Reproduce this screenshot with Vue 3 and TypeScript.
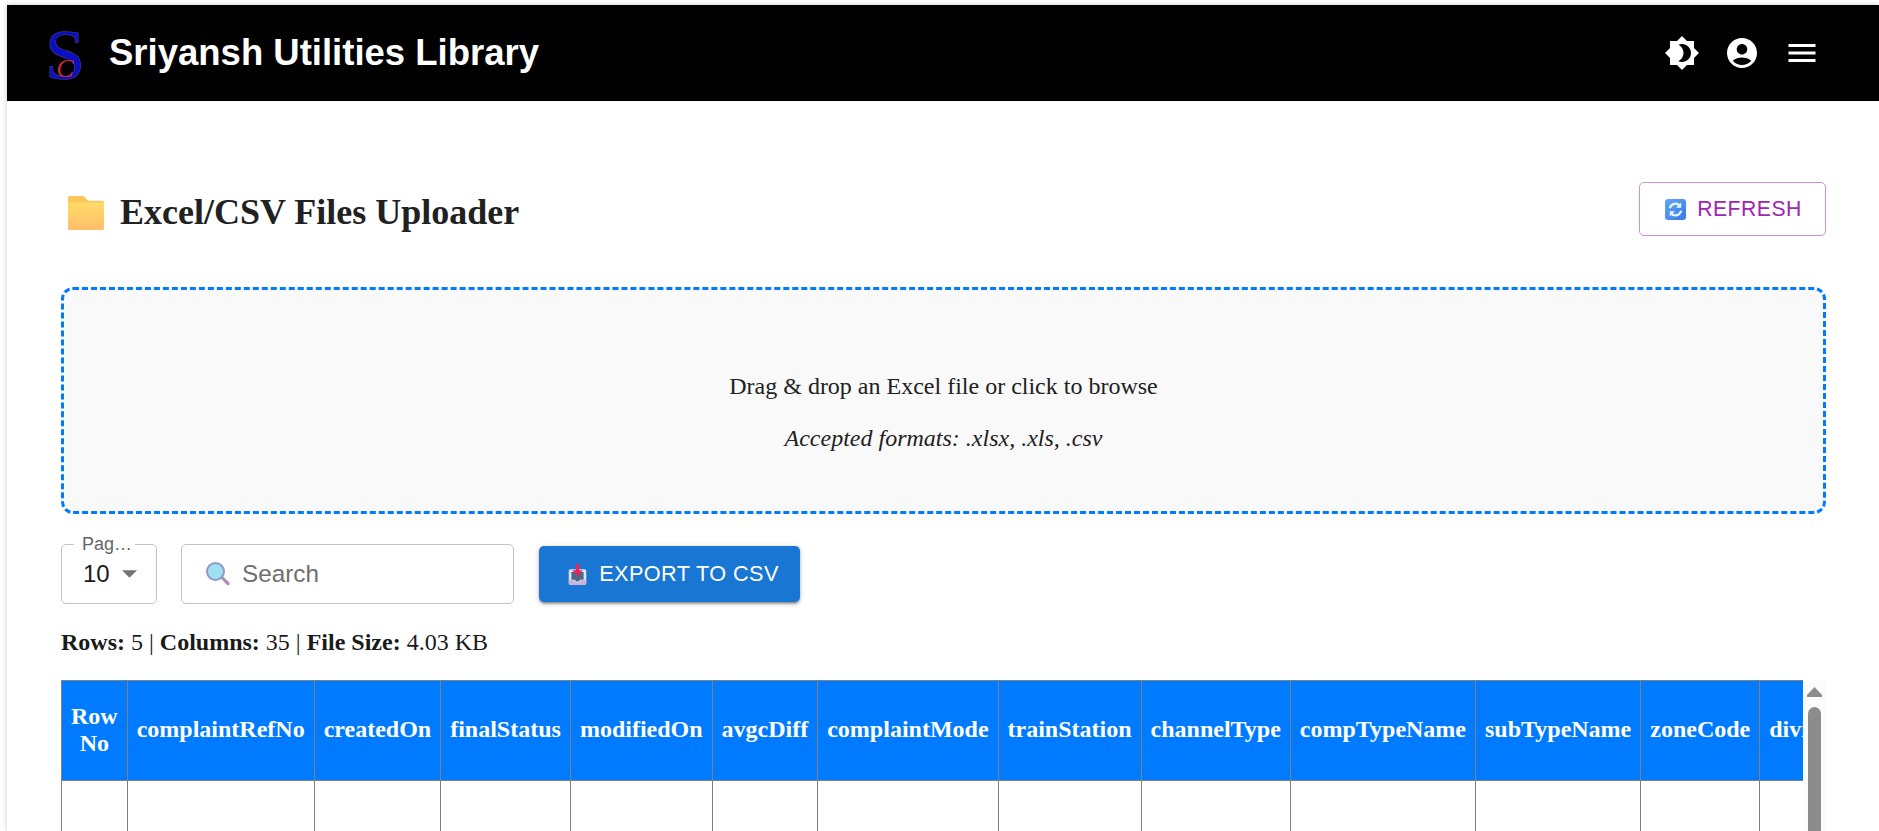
<script setup lang="ts">
const columns: string[] = [
  'complaintRefNo', 'createdOn', 'finalStatus', 'modifiedOn', 'avgcDiff', 'complaintMode',
  'trainStation', 'channelType', 'compTypeName', 'subTypeName', 'zoneCode', 'divisionCode',
]
</script>

<template>
  <div class="frame">
    <div class="shell">
      <header class="appbar">
        <div class="brand">
          <svg class="logo" viewBox="0 0 44 60" aria-label="SC logo">
            <text class="logo-s" x="22" y="56" text-anchor="middle">S</text>
            <text class="logo-c" x="22" y="54" text-anchor="middle">C</text>
          </svg>
          <span class="brand-name">Sriyansh Utilities Library</span>
        </div>
        <div class="actions">
          <button class="icon-btn" type="button" aria-label="Theme">
            <svg viewBox="0 0 24 24"><path d="M20 8.69V4h-4.69L12 .69 8.69 4H4v4.69L.69 12 4 15.31V20h4.69L12 23.31 15.31 20H20v-4.69L23.31 12 20 8.69zM12 18c-.89 0-1.74-.2-2.5-.55C11.56 16.5 13 14.42 13 12s-1.44-4.5-3.5-5.45C10.26 6.2 11.11 6 12 6c3.31 0 6 2.69 6 6s-2.69 6-6 6z" /></svg>
          </button>
          <button class="icon-btn" type="button" aria-label="Account">
            <svg viewBox="0 0 24 24"><path d="M12 2C6.48 2 2 6.48 2 12s4.48 10 10 10 10-4.48 10-10S17.52 2 12 2zm0 4c1.93 0 3.5 1.57 3.5 3.5S13.93 13 12 13s-3.5-1.57-3.5-3.5S10.07 6 12 6zm0 14c-2.03 0-4.43-.82-6.14-2.88C7.55 15.8 9.68 15 12 15s4.45.8 6.14 2.12C16.43 19.18 14.03 20 12 20z" /></svg>
          </button>
          <button class="icon-btn" type="button" aria-label="Menu">
            <svg viewBox="0 0 24 24"><path d="M3 18h18v-2H3v2zm0-5h18v-2H3v2zm0-7v2h18V6H3z" /></svg>
          </button>
        </div>
      </header>

      <main class="content">
        <div class="title-row">
          <h1 class="title">
            <svg class="folder" viewBox="0 0 38 36">
              <defs>
                <linearGradient id="folderFront" x1="0" y1="0" x2="0" y2="1">
                  <stop offset="0" stop-color="#ffdc68" />
                  <stop offset="1" stop-color="#ffbd6b" />
                </linearGradient>
              </defs>
              <path d="M2 0h13c1.500 0 2.500.6 3.400 1.700L21 5h15c1.100 0 2 .9 2 2v6H0V2C0 .9.900 0 2 0z" fill="#fdc65c" />
              <rect y="7" width="38" height="29" rx="2" fill="url(#folderFront)" />
            </svg>
            <span>Excel/CSV Files Uploader</span>
          </h1>
          <button class="refresh" type="button">
            <svg class="btn-icon" viewBox="0 0 24 24">
              <defs>
                <linearGradient id="refreshBg" x1="0" y1="0" x2="1" y2="1">
                  <stop offset="0" stop-color="#5fa8f6" />
                  <stop offset="1" stop-color="#3a78e8" />
                </linearGradient>
              </defs>
              <rect width="24" height="24" rx="3.500" fill="url(#refreshBg)" />
              <path d="M5.500 10.500A6.800 6.800 0 0 1 17 7.500M18.500 13.500A6.800 6.800 0 0 1 7 16.500" fill="none" stroke="#eaf3ff" stroke-width="2.600" />
              <path d="M18.500 4v6h-6zM5.500 20v-6h6z" fill="#eaf3ff" />
            </svg>
            <span>REFRESH</span>
          </button>
        </div>

        <section class="dropzone">
          <p class="drop-main">Drag &amp; drop an Excel file or click to browse</p>
          <p class="drop-sub">Accepted formats: .xlsx, .xls, .csv</p>
        </section>

        <div class="toolbar">
          <div class="page-select">
            <span class="legend">Pag…</span>
            <span class="page-value">10</span>
            <svg class="caret" viewBox="0 0 14 7"><path d="M0 0h14L7 7z" /></svg>
          </div>
          <div class="search">
            <svg class="search-icon" viewBox="0 0 24 24">
              <path d="M14.500 16l2-2 6.600 6.300c.8.800.7 1.700 0 2.400-.7.700-1.600.8-2.400 0z" fill="#b48ab8" />
              <circle cx="9.500" cy="9.500" r="8.500" fill="#9fe0f0" stroke="#8c9cc6" stroke-width="2" />
            </svg>
            <span class="search-text">Search</span>
          </div>
          <button class="export" type="button">
            <svg class="btn-icon" viewBox="0 0 24 24">
              <path d="M4 6h16c1 0 2 1 2 2v13c0 1.500-1 3-3 3H5c-2 0-3-1.500-3-3V8c0-1 1-2 2-2z" fill="#dfe6f3" />
              <path d="M5 9h14v9h-4c-.5 1.500-1.500 2-3 2s-2.500-.5-3-2H5z" fill="#4c6a88" />
              <path d="M2 18h6c.5 2 2 3 4 3s3.500-1 4-3h6v4c0 1-1 2-2 2H4c-1 0-2-1-2-2z" fill="#c9b5de" />
              <path d="M10 0h4v7h4l-6 7-6-7h4z" fill="#e8245c" />
            </svg>
            <span>EXPORT TO CSV</span>
          </button>
        </div>

        <p class="stats"><b>Rows:</b> 5 | <b>Columns:</b> 35 | <b>File Size:</b> 4.03 KB</p>

        <div class="table-area">
          <div class="table-clip">
            <table class="data">
              <thead>
                <tr>
                  <th class="row-no">Row No</th>
                  <th v-for="c in columns" :key="c">{{ c }}</th>
                </tr>
              </thead>
              <tbody>
                <tr>
                  <td></td>
                  <td v-for="c in columns" :key="c"></td>
                </tr>
              </tbody>
            </table>
          </div>
          <div class="scrollbar">
            <span class="arrow"></span>
            <span class="thumb"></span>
          </div>
        </div>
      </main>
    </div>
  </div>
</template>

<style>
html, body { margin: 0; height: 831px; overflow: hidden; background: #fff; }
</style>

<style scoped>
.frame {
  height: 831px;
  overflow: hidden;
  box-sizing: border-box;
  padding: 5px 0 0 7px;
  background: #fff;
  font-family: "Liberation Serif", "Times New Roman", serif;
  color: #212121;
}
.shell {
  height: 826px;
  background: #fff;
  box-shadow: 0 0 5px rgba(0, 0, 0, 0.22);
}
.appbar {
  height: 96px;
  display: flex;
  align-items: center;
  justify-content: space-between;
  background: #000;
  padding: 0 47px 0 36px;
  box-sizing: border-box;
}
.brand { display: flex; align-items: center; gap: 22px; }
.logo { width: 44px; height: 60px; display: block; overflow: visible; }
.logo-s {
  font: 400 72px "Liberation Serif", serif;
  fill: #0d0dc4;
  stroke: #43439c;
  stroke-width: 0.6px;
}
.logo-c { font: italic 400 26px "Liberation Serif", serif; fill: #c22a3a; }
.brand-name {
  font: 700 36.500px "Liberation Sans", Arial, sans-serif;
  color: #fff;
}
.actions { display: flex; }
.icon-btn {
  width: 60px;
  height: 60px;
  padding: 12px;
  border: 0;
  background: none;
  display: block;
}
.icon-btn svg { width: 36px; height: 36px; display: block; fill: #fff; }

.content { padding: 0 53px 0 54px; }
.title-row {
  display: flex;
  justify-content: space-between;
  align-items: center;
  padding-top: 81px;
  height: 54px;
}
.title {
  margin: 7px 0 0;
  display: flex;
  align-items: center;
  gap: 16px;
  font-size: 36px;
  font-weight: 700;
  line-height: 1.2;
}
.folder { width: 36px; height: 36px; margin: 0 0 0 7px; }
.refresh {
  height: 54px;
  width: 187px;
  padding: 0 0 0 2px;
  display: flex;
  align-items: center;
  justify-content: center;
  gap: 11px;
  background: #fff;
  border: 1px solid #cf8fd9;
  border-radius: 5px;
  color: #9c27b0;
  font: 400 21.200px "Liberation Sans", Arial, sans-serif;
  letter-spacing: 0.5px;
}
.btn-icon { width: 21px; height: 21px; display: block; }

.dropzone {
  margin-top: 51px;
  height: 227px;
  box-sizing: border-box;
  padding-top: 24px;
  border: 3px dashed #007bff;
  border-radius: 12px;
  background: #f9f9f9;
  display: flex;
  flex-direction: column;
  align-items: center;
  justify-content: center;
  font-size: 24px;
}
.drop-main, .drop-sub { margin: 0; line-height: 1.2; }
.drop-sub { margin-top: 23px; font-style: italic; }

.toolbar {
  margin-top: 30px;
  display: flex;
  align-items: center;
  height: 60px;
}
.page-select {
  position: relative;
  width: 96px;
  height: 60px;
  box-sizing: border-box;
  border: 1px solid #c4c4c4;
  border-radius: 5px;
  display: flex;
  align-items: center;
  padding: 0 0 0 21px;
  font-family: "Liberation Sans", Arial, sans-serif;
}
.legend {
  position: absolute;
  left: 12px;
  top: -11px;
  padding: 0 3px 0 8px;
  background: linear-gradient(#fff 55%, transparent 55%);
  font-size: 18px;
  line-height: 20px;
  color: #666;
}
.page-value { font-size: 24px; color: #1a1a1a; }
.caret { width: 15px; height: 8px; fill: #757575; margin-left: 12px; }
.search {
  width: 333px;
  height: 60px;
  margin-left: 24px;
  box-sizing: border-box;
  border: 1px solid #c4c4c4;
  border-radius: 5px;
  display: flex;
  align-items: center;
  padding-left: 24px;
  gap: 12px;
  font-family: "Liberation Sans", Arial, sans-serif;
}
.search-icon { width: 24px; height: 24px; }
.search-text { font-size: 24.300px; color: #6f6f6f; }
.export {
  margin-left: 25px;
  width: 261px;
  height: 56px;
  padding: 0 0 0 7px;
  display: flex;
  align-items: center;
  justify-content: center;
  gap: 11px;
  border: 0;
  border-radius: 5px;
  background: #1976d2;
  color: #fff;
  font: 400 21.700px "Liberation Sans", Arial, sans-serif;
  letter-spacing: 0.4px;
  box-shadow: 0 3px 2px -2px rgba(0,0,0,.25), 0 2px 3px rgba(0,0,0,.25), 0 1px 6px rgba(0,0,0,.15);
}
.export .btn-icon { width: 21px; height: 23px; }

.stats { margin: 24px 0 0; font-size: 24px; line-height: 28px; color: #1a1a1a; }

.table-area { margin-top: 24px; display: flex; height: 400px; }
.table-clip { width: 1742px; overflow: hidden; }
.data {
  border-collapse: collapse;
  font-size: 24px;
}
.data th {
  background: #007bff;
  color: #fff;
  border: 1px solid #808080;
  padding: 11px 9px 13px;
  height: 100px;
  box-sizing: border-box;
  font-weight: 700;
  white-space: nowrap;
  line-height: 1.1;
}
.data th.row-no { white-space: normal; width: 65px; }
.data td { border: 1px solid #808080; height: 300px; }
.scrollbar {
  position: relative;
  width: 23px;
  background: #fcfcfc;
  flex: none;
}
.arrow {
  position: absolute;
  left: 4px;
  top: 7px;
  width: 15px;
  height: 10px;
  background: #8c8c8c;
  clip-path: polygon(50% 0, 100% 80%, 100% 100%, 0 100%, 0 80%);
}
.thumb {
  position: absolute;
  left: 5px;
  top: 27px;
  width: 13px;
  height: 340px;
  background: #8c8c8c;
  border-radius: 7px;
}
</style>
